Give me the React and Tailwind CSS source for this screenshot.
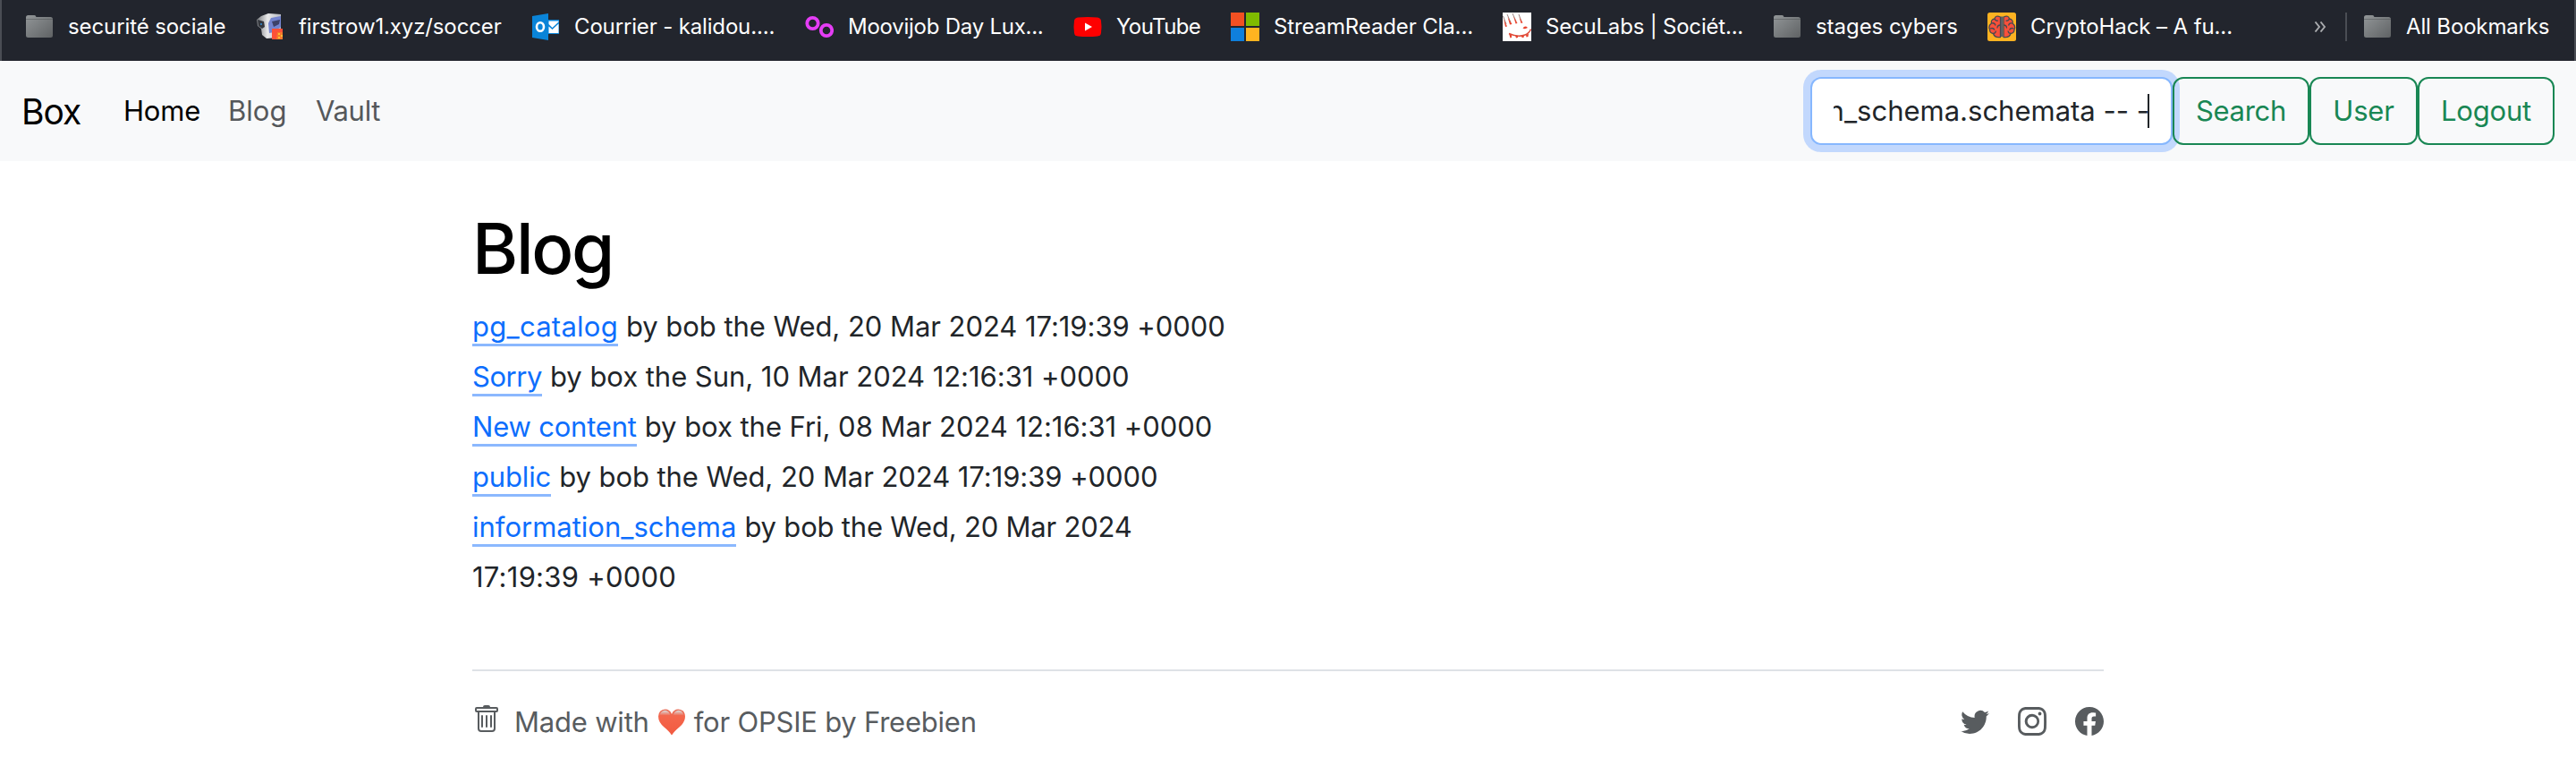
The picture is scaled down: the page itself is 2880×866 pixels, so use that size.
import { BsTwitter, BsInstagram, BsFacebook, BsTrash } from "react-icons/bs";

function Folder() {
  return (
    <svg viewBox="0 0 32 32" className="size-8 shrink-0">
      <defs>
        <linearGradient id="folder-fill" x1="0" y1="0" x2="1" y2="1">
          <stop offset="0" stopColor="#929698" />
          <stop offset="1" stopColor="#5f6264" />
        </linearGradient>
      </defs>
      <path d="M1 5.500Q1 3 3.500 3H10.500Q12 3 12.500 5H28.500Q31 5 31 7.500V25.500Q31 28 28.500 28H3.500Q1 28 1 25.500Z" fill="url(#folder-fill)" />
      <path d="M1 7.500H31" stroke="#4c5053" strokeWidth="0.800" opacity="0.600" />
    </svg>
  );
}

function Alien() {
  return (
    <svg viewBox="0 0 32 32" className="size-8 shrink-0">
      <defs>
        <linearGradient id="alien-fill" x1="0" y1="0" x2="1" y2="0">
          <stop offset="0" stopColor="#77797d" />
          <stop offset="0.450" stopColor="#e9e9ea" />
          <stop offset="1" stopColor="#b4b7c0" />
        </linearGradient>
      </defs>
      <path d="M6 4L14 1L28 2V20L25 28L12 29L7 25L6 18L2 15L1 8Z" fill="url(#alien-fill)" />
      <path d="M17 6L28 4V16L20 22L15 23L14 12Z" fill="#7484d0" />
      <path d="M2 8L9 10L10 16L7 18L3 15Z" fill="#34373e" />
      <path d="M18 10L27 8L26 13L20 16Z" fill="#3d4169" />
      <circle cx="6" cy="13" r="1" fill="#3190d8" />
      <path d="M18 18H30V30H18Z" fill="#fb5138" />
      <path d="M24 22H30V30H23Z" fill="#f7792c" />
      <path d="M25 23h2v2h-2zM28 25h2v2h-2zM25 27h2v2h-2z" fill="#ffbd33" />
    </svg>
  );
}

function Outlook() {
  return (
    <svg viewBox="0 0 32 32" className="size-8 shrink-0">
      <path d="M18 8H31V24H18Z" fill="#0a84d8" />
      <path d="M19.500 9.500H30.500V10.500L23.500 17L19.500 13Z" fill="#fff" />
      <path d="M19.500 15.500L23.500 19L30.500 12.500V23H19.500Z" fill="#fff" />
      <path d="M1 4L19 1V31L1 28Z" fill="#0a84d8" />
      <ellipse cx="10" cy="16" rx="4" ry="4.800" fill="none" stroke="#fff" strokeWidth="2.600" />
    </svg>
  );
}

function Rings() {
  return (
    <svg viewBox="0 0 32 32" className="size-8 shrink-0" fill="none" stroke="#e53df5" strokeWidth="3.800">
      <circle cx="8.500" cy="12" r="6.200" />
      <circle cx="24" cy="20" r="6.200" />
    </svg>
  );
}

function Play() {
  return (
    <svg viewBox="0 0 32 32" className="size-8 shrink-0">
      <path d="M5 5.500Q16 4.300 27 5.500Q30.500 6 31 9Q32 16 31 23Q30.500 26 27 26.500Q16 27.700 5 26.500Q1.500 26 1 23Q0 16 1 9Q1.500 6 5 5.500Z" fill="#fe0000" />
      <path d="M13 11.500L21 16L13 20.500Z" fill="#fff" />
    </svg>
  );
}

function Squares() {
  return (
    <svg viewBox="0 0 32 32" className="size-8 shrink-0">
      <path d="M0 0H15V15H0Z" fill="#f25022" />
      <path d="M17 0H32V15H17Z" fill="#7fba00" />
      <path d="M0 17H15V32H0Z" fill="#0f7fdc" />
      <path d="M17 17H32V32H17Z" fill="#ffb420" />
    </svg>
  );
}

function Claw() {
  return (
    <svg viewBox="0 0 32 32" className="size-8 shrink-0">
      <path d="M0 0H32V32H0Z" fill="#fff" />
      <path d="M0.500 4L4 13M5 2L9 11M11 1L15 10M18 2L21 10" fill="none" stroke="#9a8583" strokeWidth="1" />
      <g fill="#e8442f">
        <path d="M1 7L5 15.500L3 16ZM5.500 5L10.500 13L8 13.500ZM12 4L16.500 12L14.500 12.500ZM18.500 5L22.500 11.500L20.500 12Z" />
        <path d="M22.500 17.500Q25 14 28 17Q25 19 22.500 17.500Z" />
        <path d="M7 23.500L10 24.500V28L8.500 28.500ZM14 25.500L17 26V28L15 28.500ZM21 26L24 25.500L23.500 28L21.500 28ZM26 25L29 23.500L28.500 27L26.500 27.500Z" />
      </g>
      <path d="M7 23.500Q17 28 25 25Q30 23 31.500 18.500" fill="none" stroke="#df4b39" strokeWidth="1.500" />
    </svg>
  );
}

function Brain() {
  return (
    <svg viewBox="0 0 32 32" className="size-8 shrink-0">
      <rect width="32" height="32" rx="2.500" fill="#fdb221" />
      <g fill="#f9503a" stroke="#474a50" strokeWidth="1.300" strokeLinejoin="round">
        <path d="M14.500 5Q9 2.500 8 7Q3.500 8 4.500 12Q0.500 15 2.500 19Q2.500 23 6.500 23.500Q8 28.500 14.500 27.500Z" />
        <path d="M18 5Q23.500 2.500 24.500 7Q29 8 28 12Q32 15 30 19Q30 23 26 23.500Q24.500 28.500 18 27.500Z" />
        <path d="M8 7Q9 10 12 9M4.500 12Q8 11 9 14.500M3 18Q6.500 16.500 8 19.500M6.500 23.500Q9 23.500 9.500 20.500M14.500 14Q11 14 11 17.500M24.500 7Q23.500 10 20.500 9M28 12Q24.500 11 23.500 14.500M29.500 18Q26 16.500 24.500 19.500M26 23.500Q23.500 23.500 23 20.500M18 14Q21.500 14 21.500 17.500" fill="none" />
      </g>
      <path d="M15 4.500H17.500V27H15Z" fill="#5b6068" />
    </svg>
  );
}

function Heart() {
  return (
    <svg viewBox="0 0 32 32" className="ml-[9px] mr-[9px] h-8 w-8 shrink-0">
      <defs>
        <linearGradient id="heart-fill" x1="0" y1="0" x2="0" y2="1">
          <stop offset="0" stopColor="#e8705c" />
          <stop offset="0.300" stopColor="#f4664c" />
          <stop offset="1" stopColor="#f25a40" />
        </linearGradient>
        <linearGradient id="heart-shine" x1="0" y1="0" x2="0" y2="1">
          <stop offset="0" stopColor="#dcdcdc" />
          <stop offset="1" stopColor="#dcdcdc" stopOpacity="0" />
        </linearGradient>
      </defs>
      <path d="M16 30.500Q13.500 26.500 7.500 21.500Q1 16 1 9.500Q1.500 2 8.500 1.500Q14 1.500 16 7Q18 1.500 23.500 1.500Q30.500 2 31 9.500Q31 16 24.500 21.500Q18.500 26.500 16 30.500Z" fill="url(#heart-fill)" />
      <path d="M2.500 8Q4 3 8.500 2.800Q13 3 14.500 8.500ZM17.500 8.500Q19 3 23.500 2.800Q28 3 29.500 8Z" fill="url(#heart-shine)" />
    </svg>
  );
}

const bookmarks = [
  { icon: <Folder />, label: "securité sociale", cls: "w-[258px] tracking-[-0.1px]" },
  { icon: <Alien />, label: "firstrow1.xyz/soccer", cls: "w-[308px] tracking-[-0.13px]" },
  { icon: <Outlook />, label: "Courrier - kalidou....", cls: "w-[306px] tracking-[-0.15px]" },
  { icon: <Rings />, label: "Moovijob Day Lux...", cls: "w-[300px] tracking-[-0.25px]" },
  { icon: <Play />, label: "YouTube", cls: "w-[176px] tracking-[-0.6px]" },
  { icon: <Squares />, label: "StreamReader Cla...", cls: "w-[304px] tracking-[-0.13px]" },
  { icon: <Claw />, label: "SecuLabs | Sociét...", cls: "w-[302px] tracking-[-0.2px]" },
  { icon: <Folder />, label: "stages cybers", cls: "w-[240px] tracking-[-0.05px]" },
  { icon: <Brain />, label: "CryptoHack – A fu...", cls: "w-[365px] tracking-[-0.1px]" },
];

const posts = [
  { title: "pg_catalog", meta: "by bob the Wed, 20 Mar 2024 17:19:39 +0000", cls: "tracking-[0.26px]", metaCls: "tracking-[-0.05px]" },
  { title: "Sorry", meta: "by box the Sun, 10 Mar 2024 12:16:31 +0000", cls: "tracking-[-0.44px]", metaCls: "tracking-[-0.04px]" },
  { title: "New content", meta: "by box the Fri, 08 Mar 2024 12:16:31 +0000", cls: "tracking-[-0.2px]", metaCls: "tracking-[-0.04px]" },
  { title: "public", meta: "by bob the Wed, 20 Mar 2024 17:19:39 +0000", cls: "tracking-[-0.15px]", metaCls: "tracking-[-0.06px]" },
  { title: "information_schema", meta: "by bob the Wed, 20 Mar 2024", cls: "", metaCls: "tracking-[-0.2px]" },
];

function BookmarksBar() {
  return (
    <header className="flex h-[68px] items-center border-x-2 border-[#4a4d54] bg-[#22252d] pb-2 pl-[26px] text-[24px] text-white">
      {bookmarks.map((b) => (
        <div key={b.label} className={"flex shrink-0 items-center gap-4 " + b.cls}>
          {b.icon}
          <span>{b.label}</span>
        </div>
      ))}
      <svg viewBox="0 0 14 12" className="h-3 w-3.5 shrink-0" fill="none" stroke="#a9abae" strokeWidth="1.900">
        <path d="M1.500 0.500L6 6L1.500 11.500M7.500 0.500L12 6L7.500 11.500" />
      </svg>
      <div className="ml-[21px] h-8 w-0.5 shrink-0 bg-[#4a4d54]" />
      <div className="ml-[18px] flex items-center gap-4 tracking-[-0.15px]">
        <Folder />
        <span>All Bookmarks</span>
      </div>
    </header>
  );
}

function OutlineButton({ children, width }) {
  return (
    <button className={"relative h-[76px] shrink-0 rounded-xl border-2 border-[#198754] pt-px text-[#198754] " + width}>
      {children}
    </button>
  );
}

function Navbar() {
  return (
    <nav className="flex h-28 items-center bg-[#f8f9fa] px-6 text-[#55585b]">
      <span className="w-[114px] pt-0.5 text-[39px] tracking-[-1px] text-black">Box</span>
      <span className="w-[117px] pt-px tracking-[-0.2px] text-black">Home</span>
      <span className="w-[98px] pt-px">Blog</span>
      <span className="pt-px tracking-[-0.3px]">Vault</span>
      <div className="ml-auto flex items-center">
        <div className="flex h-[76px] w-[405px] items-center rounded-xl border-2 border-[#86b7fe] bg-white px-6 text-[#212529] ring-8 ring-[#c2d8fd]">
          <div className="flex w-full items-center justify-end overflow-hidden">
            <span className="-mr-0.5 whitespace-pre pt-px">n_schema.schemata -- -</span>
            <span className="relative h-[38px] w-0.5 shrink-0 bg-[#212529]" />
          </div>
        </div>
        <OutlineButton width="w-[153px] tracking-[-0.3px]">Search</OutlineButton>
        <OutlineButton width="w-[121px] tracking-[-0.2px]">User</OutlineButton>
        <OutlineButton width="w-[153px] tracking-[-0.2px]">Logout</OutlineButton>
      </div>
    </nav>
  );
}

export default function App() {
  return (
    <div className="flex h-[866px] w-[2880px] flex-col overflow-hidden whitespace-nowrap bg-white font-['Inter',sans-serif] text-[31px] text-[#212529]">
      <BookmarksBar />
      <Navbar />
      <main className="px-[528px] pt-12">
        <h1 className="mb-[9px] text-[78px] font-medium leading-[100px] tracking-[-2.3px] text-black">Blog</h1>
        {posts.map((p) => (
          <div key={p.title} className="flex h-14 items-center">
            <a className={"mr-[9px] h-11 border-b-3 border-[#8bb8fe] leading-[44px] text-[#0d6efd] " + p.cls}>{p.title}</a>
            <span className={p.metaCls}>{p.meta}</span>
          </div>
        ))}
        <div className="flex h-14 items-center tracking-[0.25px]">17:19:39 +0000</div>
        <footer className="mt-[75px] flex items-start border-t-2 border-[#dee2e6] text-[#585c5f]">
          <div className="mt-[34px] flex items-center">
            <BsTrash className="mb-1.5 mr-[15px] size-8" />
            <span className="tracking-[-0.2px]">Made with</span>
            <Heart />
            <span className="tracking-[-0.22px]">for OPSIE by Freebien</span>
          </div>
          <div className="ml-auto mt-10 flex gap-8">
            <BsTwitter className="size-8" />
            <BsInstagram className="size-8" />
            <BsFacebook className="size-8" />
          </div>
        </footer>
      </main>
    </div>
  );
}
